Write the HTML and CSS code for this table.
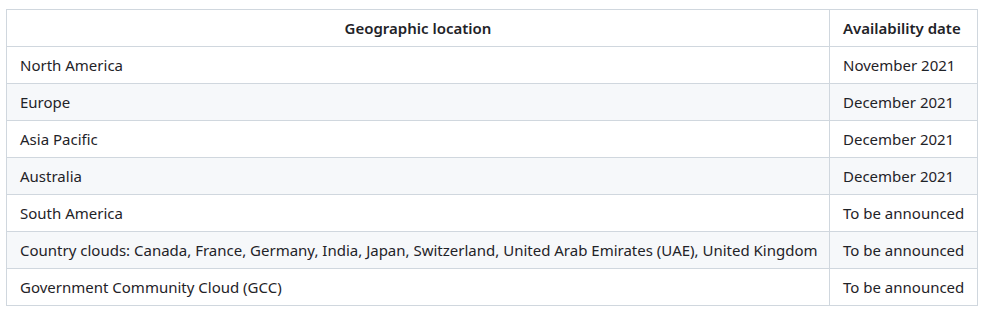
FILE: index.html
```html
<!DOCTYPE html>
<html lang="en">
<head>
<meta charset="utf-8">
<title>Availability</title>
<link rel="stylesheet" href="styles.css">
</head>
<body>
<table class="avail">
  <colgroup><col class="c-loc"><col class="c-date"></colgroup>
  <thead>
    <tr><th class="center">Geographic location</th><th>Availability date</th></tr>
  </thead>
  <tbody>
    <tr><td>North America</td><td>November 2021</td></tr>
    <tr><td>Europe</td><td>December 2021</td></tr>
    <tr><td>Asia Pacific</td><td>December 2021</td></tr>
    <tr><td>Australia</td><td>December 2021</td></tr>
    <tr><td>South America</td><td>To be announced</td></tr>
    <tr><td>Country clouds: Canada, France, Germany, India, Japan, Switzerland, United Arab Emirates (UAE), United Kingdom</td><td>To be announced</td></tr>
    <tr><td>Government Community Cloud (GCC)</td><td>To be announced</td></tr>
  </tbody>
</table>
</body>
</html>
```
FILE: styles.css
```css
html, body { background: #ffffff; }
body {
  margin: 0;
  padding: 9px 0 0 6px;
  font-family: "Noto Sans", "Open Sans", sans-serif;
  font-size: 15px;
  line-height: 24px;
  color: #1f2328;
}
.avail {
  border-collapse: collapse;
  table-layout: fixed;
  width: 971px;
}
.c-loc { width: 823px; }
.c-date { width: 148px; }
.avail th, .avail td {
  border: 1px solid #d0d7de;
  padding: 6px 13px;
  white-space: nowrap;
  overflow: hidden;
  text-align: left;
}
.avail th { font-weight: 600; }
.avail th.center { text-align: center; }
.avail tbody tr:nth-child(even) { background: #f6f8fa; }
```
